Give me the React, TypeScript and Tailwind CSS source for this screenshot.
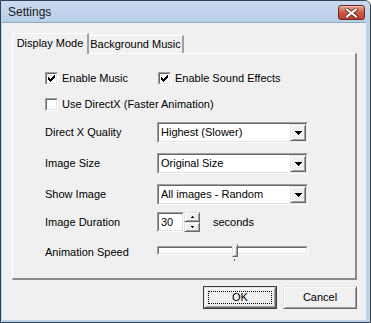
import React from "react";

const sunkenOuter =
  "border border-t-[#a0a0a0] border-l-[#a0a0a0] border-r-white border-b-white";
const sunkenInner =
  "border border-t-[#696969] border-l-[#696969] border-r-[#e3e3e3] border-b-[#e3e3e3]";
const raised =
  "bg-[#f0f0f0] border border-t-[#e3e3e3] border-l-[#e3e3e3] border-r-[#696969] border-b-[#696969] shadow-[inset_1px_1px_0_#ffffff,inset_-1px_-1px_0_#a0a0a0]";

function Check({ checked }: { checked?: boolean }) {
  return (
    <div className={`w-[13px] h-[13px] shrink-0 bg-white ${sunkenOuter}`}>
      <div className={`w-full h-full flex items-center justify-center ${sunkenInner}`}>
        {checked && (
          <svg width="7" height="7" viewBox="0 0 7 7" shapeRendering="crispEdges">
            <path d="M6 0h1v3h-1v1h-1v1h-1v1h-1v1h-1v-1h-1v-1h-1v-3h1v1h1v1h1v-1h1v-1h1z" fill="#000" />
          </svg>
        )}
      </div>
    </div>
  );
}

function Arrow() {
  return (
    <svg width="7" height="4" viewBox="0 0 7 4" shapeRendering="crispEdges">
      <path d="M0 0h7v1h-1v1h-1v1h-1v1h-1v-1h-1v-1h-1v-1h-1z" fill="#000" />
    </svg>
  );
}

function Combo({ value }: { value: string }) {
  return (
    <div className={`w-[151px] h-[21px] bg-white ${sunkenOuter}`}>
      <div className={`h-full flex items-center ${sunkenInner}`}>
        <span className="flex-1 pl-[2px] whitespace-nowrap">{value}</span>
        <div className={`w-[16px] h-full flex items-center justify-center ${raised}`}>
          <Arrow />
        </div>
      </div>
    </div>
  );
}

function Spin() {
  return (
    <div className="flex items-center">
      <div className={`w-[27px] h-[20px] bg-white ${sunkenOuter}`}>
        <div className={`h-full flex items-center pl-[2px] ${sunkenInner}`}>30</div>
      </div>
      <div className="flex flex-col w-[16px] h-[20px]">
        <div className={`flex-1 flex items-center justify-center ${raised}`}>
          <svg width="3" height="2" viewBox="0 0 3 2" shapeRendering="crispEdges">
            <path d="M1 0h1v1h1v1h-3v-1h1z" fill="#000" />
          </svg>
        </div>
        <div className={`flex-1 flex items-center justify-center ${raised}`}>
          <svg width="3" height="2" viewBox="0 0 3 2" shapeRendering="crispEdges">
            <path d="M0 0h3v1h-1v1h-1v-1h-1z" fill="#000" />
          </svg>
        </div>
      </div>
      <span className="ml-[13px]">seconds</span>
    </div>
  );
}

function Slider() {
  return (
    <div className="relative w-[151px] h-[17px]">
      <div className={`absolute left-0 right-0 top-[2px] h-[9px] bg-white ${sunkenOuter}`}>
        <div className={`w-full h-full ${sunkenInner}`} />
      </div>
      <div className={`absolute left-[75px] top-0 w-[6px] h-[13px] ${raised}`} />
      <div className="absolute left-[77px] top-[15px] w-[1px] h-[2px] bg-[#696969]" />
    </div>
  );
}

function Row({ label, children }: { label: string; children: React.ReactNode }) {
  return (
    <div className="flex items-center">
      <span className="w-[112px] whitespace-nowrap">{label}</span>
      {children}
    </div>
  );
}

export default function App() {
  return (
    <div className="w-[371px] h-[323px] flex flex-col bg-[#bcd3ea] border border-[#34414f] rounded-tr-[6px] font-['Liberation_Sans',Arial,sans-serif] text-[11px] leading-none text-black overflow-hidden">
      {/* title bar */}
      <div className="h-[21px] shrink-0 flex items-center justify-between pl-[7px] pr-[5px] bg-gradient-to-b from-[#c8dbef] to-[#b8cfe8]">
        <span className="text-[12px] text-[#1a1a1a]">Settings</span>
        <div className="w-[27px] h-[15px] mt-[2px] rounded-[3px] border border-[#6b2323] bg-gradient-to-b from-[#e8a493] via-[#cc5a45] to-[#c23f28] flex items-center justify-center shadow-[inset_0_1px_0_#f2c4b8]">
          <svg width="13" height="10" viewBox="0 0 13 10">
            <path d="M2 1.5 L11 8.5 M11 1.5 L2 8.5" stroke="#5a2a22" strokeWidth="3.6" strokeLinecap="square" />
            <path d="M2 1.5 L11 8.5 M11 1.5 L2 8.5" stroke="#ffffff" strokeWidth="2" strokeLinecap="square" />
          </svg>
        </div>
      </div>

      {/* client area */}
      <div className="flex-1 ml-[1px] mr-[4px] mb-[2px] bg-[#f0f0f0] border-t border-[#8fa6bf] flex flex-col">
        {/* tabs */}
        <div className="flex items-end ml-[10px] mt-[9px] h-[21px]">
          <div className="h-[21px] w-[77px] bg-[#f0f0f0] border-t border-l border-white border-r-2 border-r-[#a0a0a0] flex items-center justify-center pb-[1px] relative z-10 -mb-[1px]">
            Display Mode
          </div>
          <div className="h-[18px] w-[95px] border-t border-white border-r-2 border-r-[#a0a0a0] flex items-center justify-center">
            Background Music
          </div>
        </div>

        {/* panel */}
        <div className="ml-[10px] w-[345px] h-[227px] border-t border-l border-white border-r-2 border-b-2 border-r-[#8a8a8a] border-b-[#8a8a8a] flex flex-col pl-[32px] pt-[18px]">
          <div className="flex items-center h-[13px]">
            <div className="w-[113px] flex items-center">
              <Check checked />
              <span className="ml-[4px]">Enable Music</span>
            </div>
            <Check checked />
            <span className="ml-[4px]">Enable Sound Effects</span>
          </div>
          <div className="flex items-center h-[13px] mt-[13px]">
            <Check />
            <span className="ml-[4px]">Use DirectX (Faster Animation)</span>
          </div>
          <div className="mt-[11px]">
            <Row label="Direct X Quality">
              <Combo value="Highest (Slower)" />
            </Row>
          </div>
          <div className="mt-[10px]">
            <Row label="Image Size">
              <Combo value="Original Size" />
            </Row>
          </div>
          <div className="mt-[10px]">
            <Row label="Show Image">
              <Combo value="All images - Random" />
            </Row>
          </div>
          <div className="mt-[7px]">
            <Row label="Image Duration">
              <Spin />
            </Row>
          </div>
          <div className="mt-[12px]">
            <Row label="Animation Speed">
              <Slider />
            </Row>
          </div>
        </div>

        {/* buttons */}
        <div className="flex justify-end gap-[6px] mt-[6px] mr-[9px]">
          <div className="w-[74px] h-[23px] border border-[#3c3c3c]">
            <div className={`w-full h-full flex items-center justify-center ${raised} p-[3px]`}>
              <div className="w-full h-full border border-dotted border-black flex items-center justify-center">
                OK
              </div>
            </div>
          </div>
          <div className={`w-[74px] h-[23px] flex items-center justify-center ${raised}`}>Cancel</div>
        </div>
      </div>
    </div>
  );
}
